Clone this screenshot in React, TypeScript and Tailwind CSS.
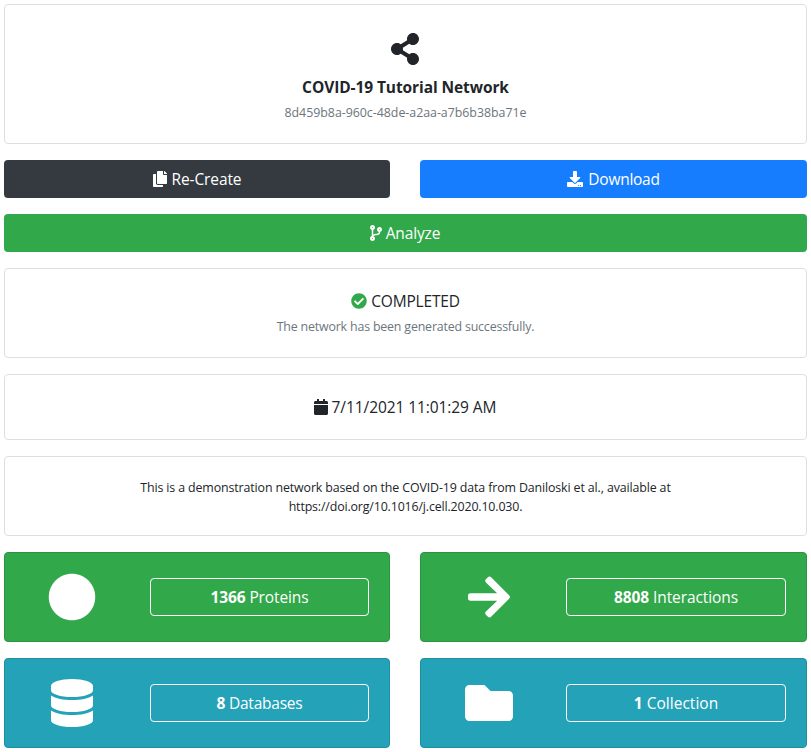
import type { ReactNode } from "react";
import {
  FaArrowRight,
  FaCalendar,
  FaCheckCircle,
  FaCircle,
  FaCodeBranch,
  FaCopy,
  FaDatabase,
  FaDownload,
  FaFolder,
  FaShareAlt,
} from "react-icons/fa";

function Card({ className, children }: { className: string; children: ReactNode }) {
  return (
    <section className={`rounded border border-[#dfdfdf] bg-white text-center ${className}`}>
      {children}
    </section>
  );
}

function Action({ className, icon, children }: { className: string; icon: ReactNode; children: ReactNode }) {
  return (
    <button
      className={`flex h-[38px] items-center justify-center rounded text-[15.5px] text-white ${className}`}
    >
      {icon}
      {children}
    </button>
  );
}

function Stat({
  className,
  icon,
  children,
}: {
  className: string;
  icon: ReactNode;
  children: ReactNode;
}) {
  return (
    <section
      className={`grid h-[90px] items-center gap-[30px] rounded border pr-5 text-white ${className}`}
    >
      <div className="flex justify-center text-5xl">{icon}</div>
      <button className="h-[38px] rounded border border-white pt-0.5 text-[15.5px]">{children}</button>
    </section>
  );
}

export default function App() {
  return (
    <main className="flex h-[752px] w-[811px] flex-col gap-4 bg-white p-1 font-['Open_Sans',sans-serif] text-[#212529]">
      <Card className="flex h-[140px] flex-col items-center pt-7">
        <FaShareAlt className="mr-px size-8" />
        <h1 className="mt-2.5 text-[15.5px] leading-6 font-bold tracking-[-0.09px]">COVID-19 Tutorial Network</h1>
        <p className="mt-0.5 text-[12.4px] leading-6 tracking-[-0.03px] text-[#6c757d]">
          8d459b8a-960c-48de-a2aa-a7b6b38ba71e
        </p>
      </Card>

      <div className="grid grid-cols-[386px_387px] gap-[30px]">
        <Action className="gap-1 bg-[#343a40] pr-px" icon={<FaCopy className="size-4" />}>
          <span className="pt-0.5 tracking-[-0.12px]">Re-Create</span>
        </Action>
        <Action className="gap-[5px] bg-[#167dff]" icon={<FaDownload className="size-4" />}>
          <span className="pt-0.5 tracking-[-0.26px]">Download</span>
        </Action>
      </div>

      <Action className="gap-[2px] bg-[#31a84a] pr-0.5" icon={<FaCodeBranch className="-ml-px size-4" />}>
        <span className="pt-0.5 tracking-[-0.12px]">Analyze</span>
      </Action>

      <Card className="h-[90px] pt-5">
        <p className="flex items-center justify-center gap-1 text-[15.5px] leading-6">
          <FaCheckCircle className="size-4 text-[#31a84a]" />
          <span className="tracking-[-0.18px]">COMPLETED</span>
        </p>
        <p className="mt-0.5 text-[12.4px] leading-6 tracking-[-0.175px] text-[#6c757d]">
          The network has been generated successfully.
        </p>
      </Card>

      <Card className="flex h-[66px] items-center justify-center gap-[3px] pr-0.5 text-[15.5px]">
        <FaCalendar className="size-4" />
        <span className="pt-0.5 tracking-[-0.08px]">7/11/2021 11:01:29 AM</span>
      </Card>

      <Card className="h-20 pt-[21px] text-[12.4px] leading-[19px]">
        <p className="tracking-[-0.125px]">
          This is a demonstration network based on the COVID-19 data from Daniloski et al., available at
        </p>
        <p className="tracking-[-0.15px]">https://doi.org/10.1016/j.cell.2020.10.030.</p>
      </Card>

      <div className="grid grid-cols-[386px_387px] gap-x-[30px] gap-y-4">
        <Stat className="grid-cols-[1fr_219px] border-[#2b9341] bg-[#31a84a] pl-[19px]" icon={<FaCircle />}>
          <span className="tracking-[-0.11px]">
            <b>1366</b> Proteins
          </span>
        </Stat>
        <Stat className="grid-cols-[1fr_220px] border-[#2b9341] bg-[#31a84a] pl-5" icon={<FaArrowRight />}>
          <span className="tracking-[-0.09px]">
            <b>8808</b> Interactions
          </span>
        </Stat>
        <Stat className="grid-cols-[1fr_219px] border-[#1f8ea0] bg-[#24a2b8] pl-[19px]" icon={<FaDatabase />}>
          <span className="tracking-[-0.24px]">
            <b>8</b> Databases
          </span>
        </Stat>
        <Stat className="grid-cols-[1fr_220px] border-[#1f8ea0] bg-[#24a2b8] pl-5" icon={<FaFolder />}>
          <span className="tracking-[0.02px]">
            <b>1</b> Collection
          </span>
        </Stat>
      </div>
    </main>
  );
}
